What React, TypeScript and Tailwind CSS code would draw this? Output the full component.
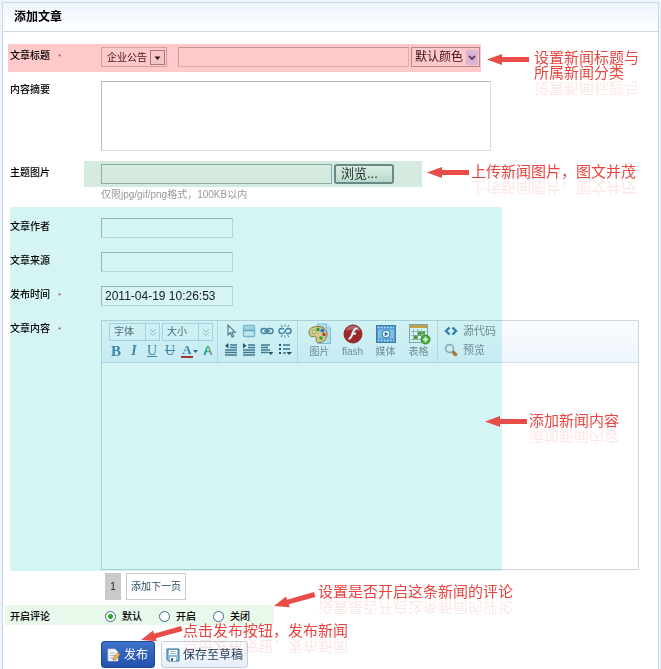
import { useState } from 'react';
import type { ReactNode } from 'react';
import clsx from 'clsx';

const comments = [
  { value: 'default', label: '默认' },
  { value: 'open', label: '开启' },
  { value: 'close', label: '关闭' },
];

const field = 'block border border-[#b4b9bd] border-r-[#dcdfe2] border-b-[#dcdfe2] bg-white px-[3px] text-xs text-[#222] outline-none';

const mirror = '[-webkit-box-reflect:below_1px_linear-gradient(#0002,#0002)]';
// only the first of two lines is mirrored
const mirrorFirstLine = '[-webkit-box-reflect:below_-14px_linear-gradient(#0002_50%,transparent_50%)]';

function Arrow() {
  return (
    <svg width="42" height="11" viewBox="0 0 42 11" className="shrink-0" fill="#e84c47">
      <path d="M0 5.5 15 0v3h27v5H15v3z" />
    </svg>
  );
}

function SlantArrow() {
  return (
    <svg width="42" height="16" viewBox="0 0 42 16" className="shrink-0" fill="#e84c47">
      <path d="M0 14 12 4.500l1 3.200L40 0l1.500 5L14.800 12.300l1 3z" />
    </svg>
  );
}

// Red hint text with a pale mirror image under it
function Hint({ children, twoLines }: { children: ReactNode; twoLines?: boolean }) {
  return (
    <p className={clsx('text-[15px] leading-[15px] font-normal whitespace-nowrap text-[#e84540]', twoLines ? mirrorFirstLine : mirror)}>
      {children}
    </p>
  );
}

function Label({ htmlFor, required, children }: { htmlFor?: string; required?: boolean; children: ReactNode }) {
  return (
    <label htmlFor={htmlFor} className="w-[91px] shrink-0 text-[10px] leading-[18px] font-medium text-black">
      {children}
      {required && <span className="ml-2 text-[8px] font-normal text-[#c33]">*</span>}
    </label>
  );
}

function DoubleChevron() {
  return (
    <span className="flex w-[14px] items-center justify-center border-l border-[#c5dbe6]">
      <svg width="8" height="9" viewBox="0 0 8 9" fill="none" stroke="#a9c3cf">
        <path d="m1 1 3 3 3-3M1 4.500l3 3 3-3" />
      </svg>
    </span>
  );
}

function SmallIcon({ name }: { name: string }) {
  return (
    <svg width="14" height="14" viewBox="0 0 14 14" fill="none" stroke="#4a88aa" strokeWidth="1.400">
      {name === 'cursor' && <path d="M4 1v10l2.400-2.200L8.200 13l1.600-.7L8 8.200h3.200z" stroke="#597a8c" strokeWidth="1.100" fill="#fff" />}
      {name === 'window' && (
        <>
          <rect x="1.500" y="1.500" width="11" height="11" rx="1" fill="#e4f2fa" stroke="#8fbfd6" />
          <path d="M2 3h10v3H2z" fill="#b5d8e8" stroke="none" />
          <path d="M1.500 6.500h11" stroke="#6eabc8" />
        </>
      )}
      {name === 'link' && (
        <>
          <rect x="1" y="4.500" width="6" height="5" rx="2.500" />
          <rect x="7" y="4.500" width="6" height="5" rx="2.500" />
          <path d="M4 7h6" />
        </>
      )}
      {name === 'unlink' && (
        <>
          <path d="M6 5.500 5 4.500H3.500a2.500 2.500 0 0 0 0 5H5M8 8.500l1 1h1.500a2.500 2.500 0 0 0 0-5H9M5.500 9.500l3.500-5" />
          <path d="M3 1l1.500 2M7 .5v2M11 1 9.500 3M3 13l1.500-2M7 13.500v-2M11 13l-1.500-2" strokeWidth="1" />
        </>
      )}
      {name === 'outdent' && (
        <>
          <path d="M6 2h7M6 4.500h7M1 7h12M1 9.500h12M1 12h12" stroke="#477f98" />
          <path d="M4.500 0v5.500L1 2.800z" fill="#24596f" stroke="none" />
        </>
      )}
      {name === 'indent' && (
        <>
          <path d="M6 2h7M6 4.500h7M1 7h12M1 9.500h12M1 12h12" stroke="#477f98" />
          <path d="M1 0v5.500l3.500-2.700z" fill="#24596f" stroke="none" />
        </>
      )}
      {name === 'align' && (
        <>
          <path d="M1 2h9M1 4.500h7M1 7h9M1 9.500h7" stroke="#477f98" />
          <path d="M8 9h5.500L10.700 12z" fill="#24596f" stroke="none" />
        </>
      )}
      {name === 'list' && (
        <>
          <path d="M1 2h2M1 6h2M1 10h2" strokeWidth="2" stroke="#24596f" />
          <path d="M5 2h7M5 6h7M5 10h3" stroke="#477f98" />
          <path d="M8.500 9H14L11.200 12z" fill="#24596f" stroke="none" />
        </>
      )}
    </svg>
  );
}

function BigIcon({ name }: { name: string }) {
  return (
    <svg width="24" height="22" viewBox="0 0 24 22" fill="none">
      {name === 'image' && (
        <>
          <path d="M9.500 1h9l4 4v15.500h-13z" fill="#d3e8fa" stroke="#9cc0df" />
          <path d="M18.500 1v4h4" fill="#fff" stroke="#9cc0df" />
          <path d="M1 9C1 5 5 3.500 10 3.500c6 0 9 3 9 7.500s-3 8.500-7.500 8.500c-3 0-4-1.500-3.200-3.500.6-2-1-3-3.300-2.500C2.500 14 1 12.500 1 9z" fill="#f6d48e" stroke="#a9793a" />
          <circle cx="6" cy="9" r="1.800" fill="#fff4d6" stroke="#a9793a" strokeWidth=".6" />
          <circle cx="10" cy="6.500" r="1.700" fill="#3d9a4a" />
          <circle cx="14.500" cy="7.500" r="2" fill="#3179cf" />
          <circle cx="16" cy="11.500" r="1.700" fill="#d7402f" />
          <circle cx="13" cy="15" r="1.800" fill="#3b9f46" />
        </>
      )}
      {name === 'flash' && (
        <>
          <circle cx="12" cy="11" r="9" fill="#c2272b" stroke="#8f3030" />
          <path d="M4.500 8a8 8 0 0 1 15 0c-5-2-10-2-15 0z" fill="#e78483" opacity=".7" />
          <path d="M16.500 5.500c-3 0-4 2-4.800 4.500C10.800 13 10 15.500 7.500 16M11 10.700h4" stroke="#fff" strokeWidth="2.200" />
        </>
      )}
      {name === 'media' && (
        <>
          <rect x="2.500" y="2.500" width="19" height="17" fill="#5c9bd9" stroke="#4683be" />
          <path d="M4 4.500h16M4 17.500h16" stroke="#e5f2ff" strokeWidth="1.500" strokeDasharray="1.500 1.500" />
          <rect x="4" y="6.500" width="16" height="9" fill="#9ac5ee" />
          <circle cx="12" cy="11" r="4" fill="#fff" stroke="#3e79b8" strokeWidth="1" />
          <path d="m10.800 8.800 3.400 2.200-3.400 2.200z" fill="#2f6bb0" />
        </>
      )}
      {name === 'table' && (
        <>
          <rect x="2.500" y="1.500" width="18" height="18" fill="#fff" stroke="#9aa9b2" />
          <path d="M3 2h17v3H3z" fill="#e9a94c" />
          <path d="M4 8.500h15M4 12.500h15M4 16.500h15M6.500 6v12M10.500 6v12M14.500 6v12" stroke="#b2bfc7" />
          <path d="M7 12.500h3.500v3.500H7zM11 8.500h3.500v4H11zM15 8.500h3v3h-3z" fill="#57a545" />
          <circle cx="18.500" cy="16.500" r="4.500" fill="#5cb335" stroke="#408c25" />
          <path d="M15.800 16.500h5.400M18.500 13.800v5.400" stroke="#fff" strokeWidth="1.700" />
        </>
      )}
    </svg>
  );
}

const smallTools = [
  { name: 'cursor', title: '选择' },
  { name: 'window', title: '全屏' },
  { name: 'link', title: '链接' },
  { name: 'unlink', title: '取消链接' },
  { name: 'outdent', title: '减少缩进' },
  { name: 'indent', title: '增加缩进' },
  { name: 'align', title: '对齐' },
  { name: 'list', title: '列表' },
];

const bigTools = [
  { name: 'image', label: '图片' },
  { name: 'flash', label: 'flash' },
  { name: 'media', label: '媒体' },
  { name: 'table', label: '表格' },
];

function Toolbar() {
  return (
    <div className="flex h-[42px] border-b border-[#d2dfea] bg-linear-to-b from-[#fafcff] to-[#eef5fd] text-[10px] text-[#84939b]">
      <div className="flex w-[116px] shrink-0 flex-col justify-between border-r border-[#d3e1ea] pt-0.5 pb-[3px] pl-[7px]">
        <div className="flex gap-0.5 text-[#56717f]">
          <button type="button" className="flex h-[18px] w-[51px] border border-[#c5dbe6] leading-4">
            <span className="flex-1 pl-1 text-left">字体</span>
            <DoubleChevron />
          </button>
          <button type="button" className="flex h-[18px] w-[51px] border border-[#c5dbe6] leading-4">
            <span className="flex-1 pl-1 text-left">大小</span>
            <DoubleChevron />
          </button>
        </div>
        <div className="flex items-center gap-1 font-['Liberation_Serif',serif] text-sm leading-4 text-[#4a8ab0]">
          <button type="button" className="w-[14px] text-center text-[15px] font-bold">B</button>
          <button type="button" className="w-[14px] text-center font-bold italic">I</button>
          <button type="button" className="w-[14px] text-center underline">U</button>
          <button type="button" className="w-[14px] text-center line-through">U</button>
          <button type="button" className="flex items-center">
            <span className="h-[14px] w-3 border-b-2 border-[#c8353a] text-center text-[13px] leading-3 font-bold">A</span>
            <svg width="5" height="3" viewBox="0 0 5 3" fill="#3c718e"><path d="M0 0h5L2.500 3z" /></svg>
          </button>
          <button type="button" className="w-3 bg-linear-to-r from-[#2f5fe8] via-[#35c04c] to-[#ea25ac] bg-clip-text text-center font-['Liberation_Sans',sans-serif] text-[13px] font-bold text-transparent">A</button>
        </div>
      </div>
      <div className="grid w-20 shrink-0 grid-cols-4 items-center gap-x-1 border-r border-[#d3e1ea] pr-[5px] pb-0.5 pl-[6px]">
        {smallTools.map(t => (
          <button key={t.name} type="button" aria-label={t.title} className="flex justify-center">
            <SmallIcon name={t.name} />
          </button>
        ))}
      </div>
      <div className="flex w-[140px] shrink-0 border-r border-[#d3e1ea] pt-0.5 pl-[5px]">
        {bigTools.map(t => (
          <button key={t.name} type="button" className="flex w-[33px] flex-col items-center leading-[14px]">
            <BigIcon name={t.name} />
            {t.label}
          </button>
        ))}
      </div>
      <div className="flex flex-col justify-between pt-0.5 pb-1 pl-[6px] text-[11px] leading-4">
        <button type="button" className="flex items-center gap-[5px]">
          <svg width="14" height="12" viewBox="0 0 14 12" fill="none" stroke="#3d84b8" strokeWidth="2.400">
            <path d="M5.500 2.500 2 6l3.500 3.500M8.500 2.500 12 6 8.500 9.500" />
          </svg>
          源代码
        </button>
        <button type="button" className="flex items-center gap-[5px]">
          <svg width="14" height="14" viewBox="0 0 14 14" fill="none">
            <circle cx="5.500" cy="5.500" r="4" fill="#eef7fc" stroke="#9bb0bd" strokeWidth="1.400" />
            <path d="m9.500 9.500 2 2" stroke="#c57c3a" strokeWidth="3.500" strokeLinecap="round" />
          </svg>
          预览
        </button>
      </div>
    </div>
  );
}

export default function App() {
  const [date, setDate] = useState('2011-04-19 10:26:53');
  const [comment, setComment] = useState('default');

  return (
    <div className="min-h-screen overflow-x-hidden bg-[#edf4fb] px-0.5 pt-0.5 font-['Liberation_Sans','Noto_Sans_CJK_SC',sans-serif]">
      <main className="min-h-[667px] border border-b-0 border-[#c9d9e6] bg-white">
        <h1 className="h-[29px] border-b border-[#cfdbe3] bg-linear-to-b from-[#edf4fd] to-white pl-[11px] text-xs leading-[29px] font-bold text-black">添加文章</h1>

        <form className="pt-3 pr-[19px] pl-[7px]" onSubmit={e => e.preventDefault()}>
          {/* Title and category */}
          <div className="relative -ml-0.5 flex h-7 w-[473px] bg-[#ffc9c9] pt-[3px] pl-0.5">
            <Label htmlFor="title" required>文章标题</Label>
            <div className="relative h-5 w-[66px]">
              <select aria-label="分类" className="block h-5 w-full appearance-none border border-[#d3a0a2] bg-transparent pl-[5px] text-[10px] text-[#3a1518] outline-none">
                <option>企业公告</option>
              </select>
              <svg width="15" height="15" viewBox="0 0 15 15" className="pointer-events-none absolute top-[3px] right-0.5">
                <rect x=".5" y=".5" width="14" height="14" fill="#f6c5c7" stroke="#a77a80" />
                <path d="M4.500 6.500h6l-3 3.500z" fill="#30141a" />
              </svg>
            </div>
            <input id="title" className="ml-[11px] h-5 w-[231px] border border-[#c9989a] border-r-[#e0acac] border-b-[#e0acac] bg-transparent px-[3px] text-xs outline-none" />
            <div className="relative ml-0.5 h-5 w-[69px]">
              <select aria-label="标题颜色" className="block h-5 w-full appearance-none border border-[#b5868a] bg-transparent pl-[3px] text-xs leading-4 text-[#3a1518] outline-none">
                <option>默认颜色</option>
              </select>
              <svg width="12" height="15" viewBox="0 0 12 15" className="pointer-events-none absolute top-[3px] right-0.5">
                <rect width="12" height="15" rx="1" fill="#d9b3d2" />
                <path d="m3 6 3 3 3-3" fill="none" stroke="#5d3b64" strokeWidth="1.800" />
              </svg>
            </div>
            <div className="absolute top-[6px] left-full ml-[6px] flex items-start gap-[5px]">
              <div className="pt-1"><Arrow /></div>
              <Hint twoLines>设置新闻标题与<br />所属新闻分类</Hint>
            </div>
          </div>

          <div className="mt-[9px] flex">
            <Label htmlFor="summary">内容摘要</Label>
            <textarea id="summary" className={clsx(field, 'h-[70px] w-[390px] resize-none')} />
          </div>

          {/* Picture upload */}
          <div className="mt-[10px] flex">
            <label htmlFor="picture" className="w-[74px] shrink-0 pt-[3px] text-[10px] leading-[18px] font-medium text-black">主题图片</label>
            <div>
              <div className="relative flex h-[26px] w-[338px] gap-0.5 bg-[#d5ebdf] pt-[3px] pl-[17px]">
                <input id="picture" className="h-5 w-[231px] border border-[#91aba2] bg-transparent px-[3px] text-xs outline-none" />
                <button type="button" className="h-5 w-[60px] rounded-[3px] border-2 border-[#68898a] bg-linear-to-b from-[#daeee3] to-[#bcd8cc] pl-[5px] text-left text-[13px] leading-4 text-[#1c2f2b]">浏览...</button>
                <div className="absolute top-[3px] left-full ml-[5px] flex items-start gap-0.5">
                  <div className="pt-[3px]"><Arrow /></div>
                  <Hint>上传新闻图片，图文并茂</Hint>
                </div>
              </div>
              <p className="pl-[17px] text-[10px] leading-4 text-[#999]">仅限jpg/gif/png格式，100KB以内</p>
            </div>
          </div>

          <section className="relative mt-1 flex flex-col gap-[14px] pt-[11px] pb-px">
            <div className="flex">
              <Label htmlFor="author">文章作者</Label>
              <input id="author" className={clsx(field, 'h-5 w-[132px]')} />
            </div>
            <div className="flex">
              <Label htmlFor="source">文章来源</Label>
              <input id="source" className={clsx(field, 'h-5 w-[132px]')} />
            </div>
            <div className="flex">
              <Label htmlFor="date" required>发布时间</Label>
              <input id="date" value={date} onChange={e => setDate(e.target.value)} className={clsx(field, 'h-5 w-[132px]')} />
            </div>
            <div className="flex">
              <Label htmlFor="content" required>文章内容</Label>
              <div className="min-w-0 flex-1 border border-[#ccd8e0]">
                <Toolbar />
                <textarea id="content" className="block h-[206px] w-full resize-none bg-white p-2 text-xs outline-none" />
              </div>
            </div>
            <div className="pointer-events-none absolute inset-y-0 left-0 w-[492px] bg-[#d5f5f4] mix-blend-multiply" />
            <div className="pointer-events-none absolute top-[206px] left-[475px] flex items-start gap-0.5">
              <div className="pt-[3px]"><Arrow /></div>
              <Hint>添加新闻内容</Hint>
            </div>
          </section>

          <div className="mt-0.5 ml-[95px] flex gap-[5px]">
            <span className="w-4 bg-[#c9c9c9] text-center text-[10px] leading-[27px] text-[#222]">1</span>
            <button type="button" className="h-[27px] w-[60px] border border-[#ccc] bg-white text-[10px] text-[#2c4a60]">添加下一页</button>
          </div>

          {/* Comment switch */}
          <div className="relative mt-[5px] -ml-[5px] flex h-5 w-[269px] items-center bg-[#e8f8ea] pl-[5px] text-[10px] font-medium text-black">
            <span id="comment-label" className="w-[95px] pt-0.5">开启评论</span>
            <div role="radiogroup" aria-labelledby="comment-label" className="flex gap-[17px] pt-[3px]">
              {comments.map(c => (
                <label key={c.value} className="flex items-center gap-[6px]">
                  <input
                    type="radio"
                    name="comment"
                    value={c.value}
                    checked={comment === c.value}
                    onChange={() => setComment(c.value)}
                    className="size-[11px] appearance-none rounded-full border border-[#3b6c85] bg-white checked:bg-[radial-gradient(circle,#2ea32e_0_2px,#fff_3px)]"
                  />
                  {c.label}
                </label>
              ))}
            </div>
            <div className="absolute -top-[21px] left-full flex items-start gap-0.5">
              <div className="pt-2"><SlantArrow /></div>
              <Hint>设置是否开启这条新闻的评论</Hint>
            </div>
          </div>

          <div className="relative mt-4 ml-[91px] flex gap-[6px]">
            <button type="submit" className="flex h-[27px] w-[54px] items-center gap-[3px] rounded-[3px] border border-[#1d479b] bg-linear-to-b from-[#3f72cb] to-[#2251ac] pl-[5px] text-xs text-white">
              <svg width="14" height="14" viewBox="0 0 14 14">
                <path d="M1 1h7l3 3v9H1z" fill="#f4f7fb" stroke="#b9c9dd" strokeWidth=".7" />
                <path d="M3 5h5M3 7.500h5M3 10h3" stroke="#a6b8cd" />
                <path d="m6 12 .8-3L11 4.500l2 2L9 11.300z" fill="#f2b64d" stroke="#a86724" strokeWidth=".7" />
              </svg>
              发布
            </button>
            <button type="button" className="flex h-[27px] w-[87px] items-center gap-[3px] rounded-[3px] border border-[#c3cede] bg-linear-to-b from-white to-[#e5edf8] pl-1 text-xs whitespace-nowrap text-[#25405a]">
              <svg width="14" height="14" viewBox="0 0 14 14" fill="none">
                <path d="M1 1h12v12H2.500L1 11.500z" fill="#8bbfdb" stroke="#2f6f98" />
                <path d="M3 2h8v5H3z" fill="#fff" />
                <path d="M4 3.500h6M4 5.500h6" stroke="#8aa8bb" strokeWidth=".8" />
                <path d="M4 9h6v4H4z" fill="#f7fbfd" />
                <path d="M5 10h2v3H5z" fill="#2f6f98" />
              </svg>
              保存至草稿
            </button>
            <div className="pointer-events-none absolute -top-[18px] left-10 flex items-start">
              <div className="pt-[3px]"><SlantArrow /></div>
              <Hint>点击发布按钮，发布新闻</Hint>
            </div>
          </div>
        </form>
      </main>
    </div>
  );
}
